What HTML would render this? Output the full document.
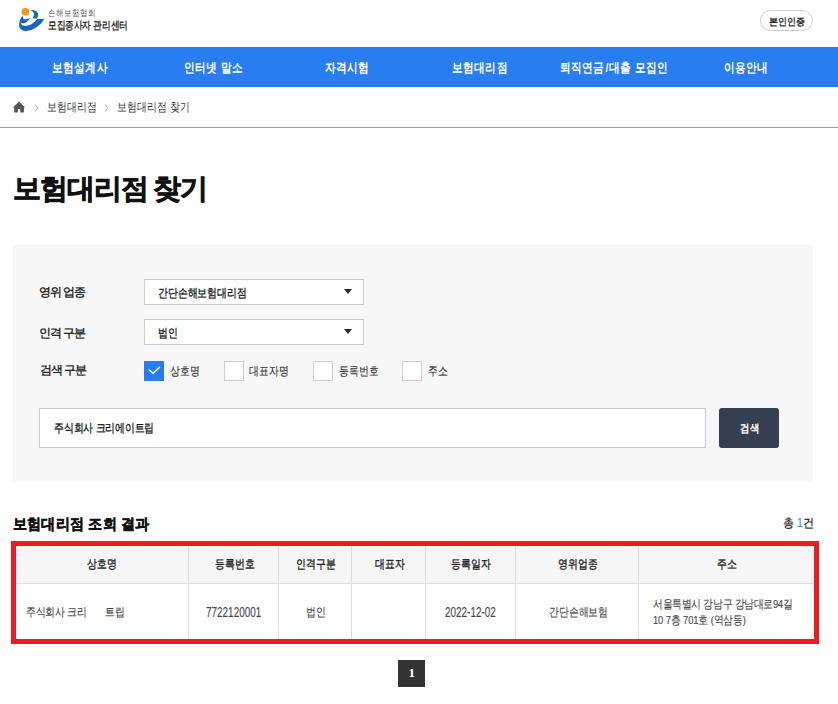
<!DOCTYPE html>
<html lang="ko"><head><meta charset="utf-8">
<style>
*{margin:0;padding:0;box-sizing:border-box}
html,body{width:838px;height:704px;overflow:hidden;background:#fff}
body{position:relative;font-family:"Liberation Sans",sans-serif;color:#222}
.a{position:absolute;white-space:nowrap;line-height:1}
.nav{position:absolute;left:0;top:47px;width:838px;height:40px;background:#287ef0}
.nt{color:#fff;font-weight:bold;font-size:13px;letter-spacing:0.6px;top:60.5px;transform:scaleX(.82);transform-origin:0 0}
.bc{top:102px;font-size:11.5px;letter-spacing:0.15px;color:#333;transform:scaleX(.82);transform-origin:0 0}
.crumbline{position:absolute;left:0;top:127px;width:838px;height:1px;background:#999}
.box{position:absolute;left:13px;top:245px;width:800px;height:236px;background:#f7f7f7}
.sel{position:absolute;left:144px;width:220px;height:26px;background:#fff;border:1px solid #ccc}
.arr{position:absolute;left:344px;width:0;height:0;border-left:4.6px solid transparent;border-right:4.6px solid transparent;border-top:5px solid #2a2a2a}
.cb{position:absolute;top:361px;width:20px;height:20px;background:#fff;border:1px solid #ccc}
.md{-webkit-text-stroke:0.3px currentColor}
.lab{font-size:12px;letter-spacing:-1px;color:#111}
.st{font-size:11.5px;letter-spacing:0;color:#111;transform:scaleX(.82);transform-origin:0 0}
.cbt{font-size:11.5px;letter-spacing:0;color:#333;top:366px;-webkit-text-stroke:0.15px currentColor;transform:scaleX(.82);transform-origin:0 0}
.inp{position:absolute;left:39px;top:408px;width:667px;height:40px;background:#fff;border:1px solid #ccc}
.btn{position:absolute;left:719px;top:408px;width:60px;height:40px;background:#344052;border-radius:3px}
.red{position:absolute;left:11px;top:541px;width:808px;height:103px;border:5px solid #ec1c24}
.th{position:absolute;left:16px;top:546px;width:798px;height:37px;background:#f6f6f6}
.hl{position:absolute;left:16px;top:583px;width:798px;height:1px;background:#ddd}
.vl{position:absolute;top:546px;width:1px;height:93px;background:#ddd}
.htx{font-size:11.5px;letter-spacing:0;color:#222;top:559px;-webkit-text-stroke:0.35px #222;transform:scaleX(.82);transform-origin:0 0}
.btx{font-size:11.5px;letter-spacing:0;color:#444;top:607px;-webkit-text-stroke:0.12px currentColor;transform:scaleX(.82);transform-origin:0 0}
.num{font-size:14px;top:605px;letter-spacing:0;transform:scaleX(.71);transform-origin:0 0;-webkit-text-stroke:0.1px currentColor}
.page{position:absolute;left:398px;top:660px;width:27px;height:27px;background:#333}
</style></head><body>

<!-- logo -->
<svg class="a" style="left:16px;top:6px" width="32" height="28" viewBox="0 0 805 704">
  <circle cx="235" cy="145" r="96" fill="#f7941d"/>
  <path d="M365 105 C420 88 525 110 552 185 C568 240 548 290 525 312 L412 312 C445 275 462 228 452 182 C442 142 405 118 365 105 Z" fill="#1466b8"/>
  <path d="M715 325 C625 465 455 615 255 628 C120 635 60 545 82 430 C90 380 105 345 125 315 C112 360 105 400 118 432 C145 490 200 505 255 498 C385 486 470 400 540 328 Z" fill="#1466b8"/>
  <path d="M168 248 C125 295 95 345 100 405 C125 450 210 445 275 398 C310 370 332 338 352 308 C295 318 240 342 205 335 C180 325 172 285 168 248 Z" fill="#1466b8"/>
</svg>
<div class="a" style="left:48px;top:9px;font-size:9px;color:#555;letter-spacing:0.7px;transform:scaleX(.82);transform-origin:0 0">손해보험협회</div>
<div class="a md" style="left:47.5px;top:19.5px;font-size:10.5px;color:#111;letter-spacing:-0.1px;transform:scaleX(.79);transform-origin:0 0">모집종사자 관리센터</div>

<div class="a" style="left:760px;top:10px;width:53px;height:21px;border:1px solid #ccc;border-radius:11px"></div>
<div class="a md" style="left:769px;top:16.5px;font-size:10px;color:#111;letter-spacing:0;transform:scaleX(.9);transform-origin:0 0">본인인증</div>

<!-- nav -->
<div class="nav"></div>
<div class="a nt" style="left:52px">보험설계사</div>
<div class="a nt" style="left:184px">인터넷 말소</div>
<div class="a nt" style="left:325px">자격시험</div>
<div class="a nt" style="left:452px">보험대리점</div>
<div class="a nt" style="left:560px">퇴직연금<span style="margin:0 0 0 1.2px">/</span>대출 모집인</div>
<div class="a nt" style="left:724px">이용안내</div>

<!-- breadcrumb -->
<svg class="a" style="left:12px;top:101px" width="14" height="12" viewBox="0 0 14 12">
  <path d="M7 0.6 L13.1 6.5 L11.9 6.5 L11.9 11.5 L8.2 11.5 L8.2 7.9 L5.9 7.9 L5.9 11.5 L2.2 11.5 L2.2 6.5 L0.9 6.5 Z" fill="#555"/>
</svg>
<svg class="a" style="left:34px;top:104px" width="5" height="8" viewBox="0 0 5 8"><path d="M1.2 0.6 L3.6 4 L1.2 7.6" fill="none" stroke="#999" stroke-width="0.8"/></svg>
<div class="a bc" style="left:47px">보험대리점</div>
<svg class="a" style="left:104px;top:104px" width="5" height="8" viewBox="0 0 5 8"><path d="M1.2 0.6 L3.6 4 L1.2 7.6" fill="none" stroke="#999" stroke-width="0.8"/></svg>
<div class="a bc" style="left:117px">보험대리점 찾기</div>
<div class="crumbline"></div>

<!-- title -->
<div class="a" style="left:13px;top:175px;font-size:28px;font-weight:bold;color:#111;letter-spacing:-1.1px;word-spacing:-1.5px;-webkit-text-stroke:0.7px #111">보험대리점 찾기</div>

<!-- search box -->
<div class="box"></div>
<div class="a lab md" style="left:39px;top:286px">영위 업종</div>
<div class="sel" style="top:279px"></div>
<div class="a st md" style="left:158px;top:288px">간단손해보험대리점</div>
<div class="arr" style="top:289px"></div>

<div class="a lab md" style="left:39px;top:327px">인격 구분</div>
<div class="sel" style="top:319px"></div>
<div class="a st md" style="left:158px;top:328px">법인</div>
<div class="arr" style="top:329px"></div>

<div class="a lab md" style="left:40px;top:364px">검색 구분</div>
<div class="cb" style="left:144px;background:#287ef0;border-color:#287ef0"></div>
<svg class="a" style="left:144px;top:361px" width="20" height="20" viewBox="0 0 20 20"><path d="M5.4 8.9 L9.1 12.2 L15.6 6.3" fill="none" stroke="#fff" stroke-width="1.4" stroke-linecap="round"/></svg>
<div class="a cbt" style="left:170px">상호명</div>
<div class="cb" style="left:224px"></div>
<div class="a cbt" style="left:249px">대표자명</div>
<div class="cb" style="left:313px"></div>
<div class="a cbt" style="left:339px">등록번호</div>
<div class="cb" style="left:402px"></div>
<div class="a cbt" style="left:428px">주소</div>

<div class="inp"></div>
<div class="a st md" style="left:54px;top:423px;letter-spacing:-0.1px">주식회사 크리에이트립</div>
<div class="btn"></div>
<div class="a" style="left:739.5px;top:422.5px;font-size:11px;letter-spacing:0.3px;color:#fff;-webkit-text-stroke:0.45px #fff;transform:scaleX(.85);transform-origin:0 0">검색</div>

<!-- results -->
<div class="a" style="left:13px;top:516px;font-size:15px;font-weight:bold;color:#111;letter-spacing:0.15px;-webkit-text-stroke:0.4px #111;transform:scaleX(.94);transform-origin:0 0">보험대리점 조회 결과</div>
<div class="a" style="left:782.5px;top:516.5px;font-size:12px;color:#111;letter-spacing:0.1px;transform:scaleX(.92);transform-origin:0 0;-webkit-text-stroke:0.2px #111">총 <span style="color:#1a8cff;-webkit-text-stroke:0;margin-left:-0.5px">1</span>건</div>

<div class="th"></div>
<div class="hl"></div>
<div class="vl" style="left:188px"></div>
<div class="vl" style="left:278px"></div>
<div class="vl" style="left:351px"></div>
<div class="vl" style="left:425px"></div>
<div class="vl" style="left:515px"></div>
<div class="vl" style="left:638px"></div>

<div class="a htx md" style="left:87px">상호명</div>
<div class="a htx md" style="left:215px">등록번호</div>
<div class="a htx md" style="left:296px">인격구분</div>
<div class="a htx md" style="left:375px">대표자</div>
<div class="a htx md" style="left:451px">등록일자</div>
<div class="a htx md" style="left:558px">영위업종</div>
<div class="a htx md" style="left:717px">주소</div>

<div class="a btx" style="left:26px;letter-spacing:-0.2px">주식회사 크리</div>
<div class="a btx" style="left:104.5px">트립</div>
<div class="a btx num" style="left:206px">7722120001</div>
<div class="a btx" style="left:306px">법인</div>
<div class="a btx num" style="left:445px">2022-12-02</div>
<div class="a btx" style="left:549px">간단손해보험</div>
<div class="a btx" style="left:653px;top:599px;letter-spacing:-0.3px">서울특별시 강남구 강남대로94길</div>
<div class="a btx" style="left:653px;top:615px;letter-spacing:-0.15px">10 7층 701호 (역삼동)</div>

<div class="red"></div>

<div class="page"></div>
<div class="a" style="left:408.5px;top:665.5px;font-size:13px;font-weight:bold;color:#fff;font-family:'Liberation Serif',serif">1</div>
</body></html>
